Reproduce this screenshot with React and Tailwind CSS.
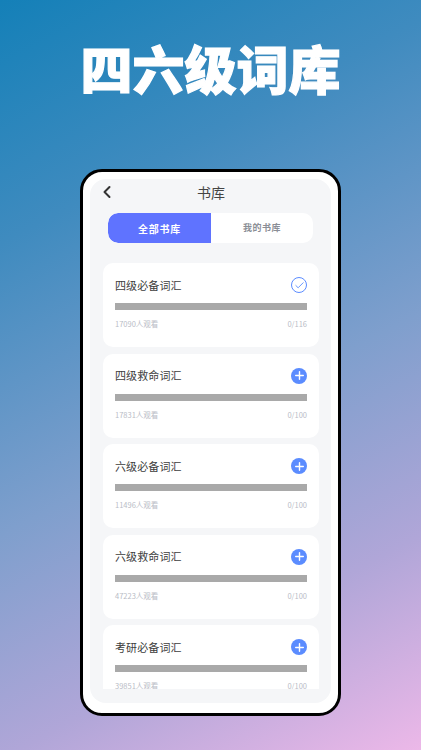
import React, { useState } from "react";
import { ChevronLeft, Check, Plus } from "lucide-react";

const cjk = { fontFamily: '"Noto Sans CJK SC", "Noto Sans", sans-serif' };

const books = [
  { name: "四级必备词汇", views: "17090人观看", progress: "0/116", added: true },
  { name: "四级救命词汇", views: "17831人观看", progress: "0/100" },
  { name: "六级必备词汇", views: "11496人观看", progress: "0/100" },
  { name: "六级救命词汇", views: "47223人观看", progress: "0/100" },
  { name: "考研必备词汇", views: "39851人观看", progress: "0/100" },
];

const BookCard = ({ book }) => (
  <div className="shrink-0 h-[84px] bg-white rounded-[10px] px-3 pt-[13px]">
    <div className="flex items-center justify-between h-[18px]">
      <p className="text-[11px] leading-none tracking-[0.1px] text-[#3d3d3d]">{book.name}</p>
      {book.added ? (
        <span className="w-[16px] h-[16px] rounded-full border-[1.5px] border-[#5b8cff] flex items-center justify-center">
          <Check size={11} strokeWidth={2} className="text-[#5b8cff]" />
        </span>
      ) : (
        <span className="w-[16px] h-[16px] rounded-full bg-[#5b8cff] flex items-center justify-center">
          <Plus size={13} strokeWidth={2.6} className="text-white" />
        </span>
      )}
    </div>
    <div className="mt-[9px] h-[7px] bg-[#a9a9a9]" />
    <div className="mt-[10px] flex justify-between text-[7.5px] leading-none text-[#b9bcc6]">
      <span>{book.views}</span>
      <span>{book.progress}</span>
    </div>
  </div>
);

const App = () => {
  const [tab, setTab] = useState("all");

  return (
    <div
      className="w-[421px] h-[750px] overflow-hidden flex flex-col items-center bg-[linear-gradient(152deg,#1480b8_0%,#3f8bbf_25%,#7f9fcd_55%,#b0a6d8_78%,#ecb8e8_100%)]"
      style={cjk}
    >
      <h1 className="mt-[35px] h-[66px] text-[52px] leading-[66px] font-black text-white whitespace-nowrap [-webkit-text-stroke:1.2px_white]">
        四六级词库
      </h1>

      {/* phone frame */}
      <div className="mt-[68px] w-[261px] h-[547px] bg-white border-[3px] border-black rounded-[22px] p-[7px] pb-[10px]">
        <div className="h-full bg-[#f5f6f8] rounded-[16px] flex flex-col pl-[13px] pr-[12px] pb-[14px]">
          <div className="relative shrink-0 h-[26px] flex items-center justify-center">
            <ChevronLeft size={20} strokeWidth={2.4} className="absolute left-[-6px] top-[3px] text-[#333]" />
            <span className="text-sm leading-none text-[#444]">书库</span>
          </div>

          <div className="shrink-0 mt-[8px] ml-[5px] mr-[6px] h-[30px] flex rounded-[10px] bg-white overflow-hidden font-bold">
            <button
              onClick={() => setTab("all")}
              className={`w-[103px] text-[10px] tracking-[0.75px] ${tab === "all" ? "bg-[#5f73ff] text-white rounded-l-[10px]" : "text-[#8b8e96]"}`}
            >
              全部书库
            </button>
            <button
              onClick={() => setTab("mine")}
              className={`flex-1 text-[9px] tracking-[0.5px] ${tab === "mine" ? "bg-[#5f73ff] text-white" : "text-[#8b8e96]"}`}
            >
              我的书库
            </button>
          </div>

          <div className="mt-[20px] flex-1 min-h-0 overflow-hidden flex flex-col gap-[6.6px]">
            {books.map((book) => (
              <BookCard key={book.name} book={book} />
            ))}
          </div>
        </div>
      </div>
    </div>
  );
};

export default App;
